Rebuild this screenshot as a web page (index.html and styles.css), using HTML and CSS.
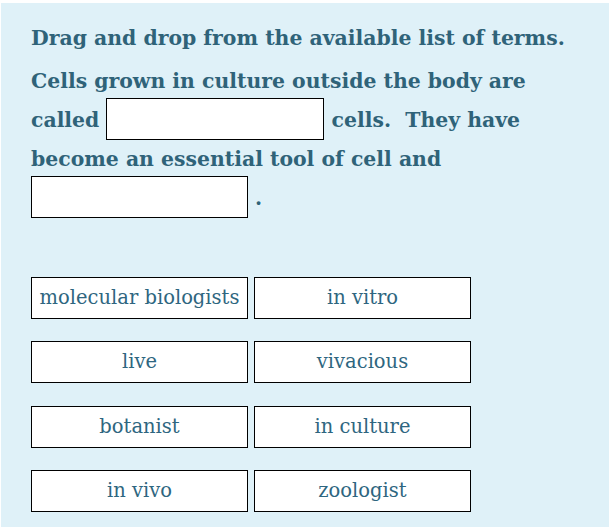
FILE: index.html
```html
<!DOCTYPE html>
<html lang="en">
<head>
  <meta charset="UTF-8">
  <title>Cell Culture - Drag and Drop</title>
  <link rel="stylesheet" href="styles.css">
</head>
<body>
  <div class="activity">
    <p class="prompt">Drag and drop from the available list of terms.</p>
    <p class="question">
      Cells grown in culture outside the body are called <span class="drop" data-answer="in vitro"></span> cells.&nbsp; They have become an essential tool of cell and <span class="drop" data-answer="molecular biologists"></span> .
    </p>
    <div class="terms">
      <div class="term" draggable="true">molecular biologists</div>
      <div class="term" draggable="true">in vitro</div>
      <div class="term" draggable="true">live</div>
      <div class="term" draggable="true">vivacious</div>
      <div class="term" draggable="true">botanist</div>
      <div class="term" draggable="true">in culture</div>
      <div class="term" draggable="true">in vivo</div>
      <div class="term" draggable="true">zoologist</div>
    </div>
  </div>
</body>
</html>
```

FILE: styles.css
```css
body {
  margin: 0;
  background: #fff;
  font-family: 'DejaVu Serif', Georgia, serif;
  color: #2f6379;
}
.activity {
  margin: 3px 0 1px 1px;
  padding: 16px 30px 15px 30px;
  background: #dff1f8;
  height: 493px;
}
.prompt {
  margin: 0 0 4px 0;
  font-size: 20.4px;
  font-weight: bold;
  line-height: 39px;
  white-space: nowrap;
}
.question {
  margin: 0 0 59px 0;
  width: 540px;
  font-size: 20.4px;
  font-weight: bold;
  line-height: 39px;
}
/* empty slots a term gets dropped into */
.drop {
  display: inline-block;
  box-sizing: border-box;
  width: 218px;
  height: 42px;
  margin: -3px 0 -1px 0;
  vertical-align: -12px;
  background: #fff;
  border: 1px solid #000;
}
.drop:last-child {
  width: 217px;
}
.terms {
  display: grid;
  grid-template-columns: 217px 217px;
  column-gap: 6px;
  row-gap: 22.33px;
}
.term {
  box-sizing: border-box;
  height: 42px;
  background: #fff;
  border: 1px solid #000;
  text-align: center;
  font-size: 19.5px;
  line-height: 40px;
  color: #2e6680;
  white-space: nowrap;
  cursor: move;
}
```
